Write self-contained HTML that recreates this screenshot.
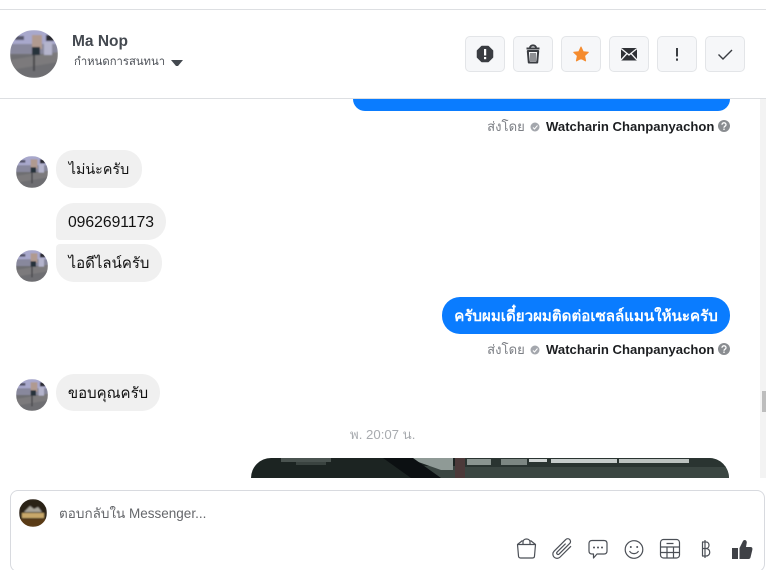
<!DOCTYPE html>
<html><head><meta charset="utf-8">
<style>
html,body{margin:0;padding:0;width:766px;height:570px;overflow:hidden;background:#fff;font-family:"Liberation Sans","Noto Sans CJK SC","WenQuanYi Zen Hei",sans-serif;color:#1c1e21}
#w{position:relative;width:766px;height:570px;overflow:hidden}
.a{position:absolute;white-space:nowrap}
.line{position:absolute;left:0;height:1px;background:#dddfe2}
.b{position:absolute;top:36px;width:38px;height:34px;background:#f6f7f9;border:1px solid #e3e5e8;border-radius:5px}
.b svg{position:absolute;left:0;top:0}
.bub{position:absolute;background:#f0f0f0;border-radius:18px;height:38px;line-height:40px;font-size:15px;color:#111;text-align:center;white-space:nowrap}
.sent{position:absolute;font-size:13.1px;white-space:nowrap;color:#90949c;height:16px;line-height:17px}
.sent b{font-weight:bold;color:#1c1e21}
</style></head>
<body><div id="w">
<svg width="0" height="0" style="position:absolute"><defs>
<clipPath id="c"><circle cx="24" cy="24" r="24"/></clipPath>
<filter id="bl"><feGaussianBlur stdDeviation="0.8"/></filter>
<g id="av"><g clip-path="url(#c)"><g filter="url(#bl)">
<rect width="48" height="48" fill="#8e8ea8"/>
<rect y="0" width="48" height="14" fill="#a8a8cc"/>
<rect y="14" width="48" height="12" fill="#88889c"/>
<rect y="24" width="48" height="24" fill="#6e6e72"/>
<path d="M0 30L48 22V32L0 40Z" fill="#7c7a7c"/>
<rect x="22" y="5" width="10" height="14" fill="#b09a90"/>
<rect x="22" y="17" width="8" height="8" fill="#28303a"/>
<rect x="23" y="25" width="2" height="16" fill="#46464c"/>
<rect x="36" y="5" width="8" height="6" fill="#2a2a30"/>
<rect x="34" y="12" width="8" height="13" fill="#b4b4cc"/>
<rect x="5" y="6" width="9" height="4" fill="#55556a"/>
</g></g></g>
</defs></svg>

<div class="line" style="top:9px;width:766px"></div>
<div class="line" style="top:98px;width:766px"></div>

<svg class="a" style="left:10px;top:30px" width="48" height="48"><use href="#av"/></svg>
<div class="a" style="left:72px;top:33px;font-size:15.500px;line-height:18px;font-weight:bold;color:#444950">Ma Nop</div>
<div class="a" style="left:74px;top:55px;font-size:11.300px;line-height:14px;color:#4b4f56">กำหนดการสนทนา</div>
<svg class="a" style="left:171px;top:60px" width="12" height="7"><path d="M0 0H12L7 6H5Z" fill="#444950"/></svg>

<div class="b" style="left:465px"><svg width="38" height="34"><path d="M15.800 9.500h6.400l4.300 4.300v6.400l-4.300 4.300h-6.400l-4.300-4.300v-6.400z" fill="#3a3d42" stroke="#3a3d42" stroke-width="1.500" stroke-linejoin="round"/><rect x="18" y="12" width="2.200" height="6.500" fill="#fff"/><rect x="18" y="20" width="2.200" height="2.200" fill="#fff"/></svg></div>
<div class="b" style="left:513px"><svg width="38" height="34"><path d="M12.500 11.500h13M16 11c0-3.500 6-3.500 6 0" fill="none" stroke="#3a3d42" stroke-width="2"/><path d="M13.800 14h10.400l-1 11.500h-8.400z" fill="none" stroke="#3a3d42" stroke-width="2" stroke-linejoin="round"/><path d="M17 16v8M19 16v8M21 16v8" stroke="#3a3d42" stroke-width="1.100"/></svg></div>
<div class="b" style="left:561px"><svg width="38" height="34"><path d="M19 10l2.200 4.700 5.100.6-3.700 3.500 1 5.100-4.600-2.500-4.600 2.500 1-5.100-3.700-3.500 5.100-.6z" fill="#f58b2e" stroke="#f58b2e" stroke-linejoin="round"/></svg></div>
<div class="b" style="left:609px"><svg width="38" height="34"><rect x="11" y="11" width="16" height="12.500" fill="#2f3136"/><path d="M11 11.500l8 6.500 8-6.500M11 23l6-6.500M27 23l-6-6.500" fill="none" stroke="#f6f7f9" stroke-width="1.300"/></svg></div>
<div class="b" style="left:657px"><svg width="38" height="34"><rect x="18" y="11" width="2" height="8.500" fill="#3a3d42"/><rect x="18" y="21.500" width="2" height="2.200" fill="#3a3d42"/></svg></div>
<div class="b" style="left:705px"><svg width="38" height="34"><path d="M12.500 17.500l4.500 4.500 9-9" fill="none" stroke="#3a3d42" stroke-width="1.400"/></svg></div>

<!-- scrollbar -->
<div class="a" style="left:760px;top:99px;width:6px;height:379px;background:#f3f3f3"></div>
<div class="a" style="left:762px;top:391px;width:4px;height:21px;background:#bdbdbd"></div>

<!-- messages -->
<div class="a" style="left:353px;top:99px;width:377px;height:12px;background:#0a7cff;border-radius:0 0 18px 18px"></div>

<div class="sent" style="right:36px;top:118px"><span style="color:#7c7f85;margin-right:1px">ส่งโดย</span> <svg width="10" height="10" style="vertical-align:-1px;margin:0 2px 0 1px"><circle cx="5" cy="5" r="4.500" fill="#a4a7ad"/><path d="M3 5.500l1.500 1.500 3-3.500" stroke="#fff" fill="none"/></svg> <b>Watcharin Chanpanyachon</b> <svg width="12" height="12" style="vertical-align:-1px"><circle cx="6" cy="6" r="6" fill="#8a8d91"/><path d="M4 4.700c0-2.500 4-2.500 4 0 0 1.500-2 1.500-2 3M6 8.500v1.500" stroke="#fff" stroke-width="1.300" fill="none"/></svg></div>

<svg class="a" style="left:16px;top:156px" width="32" height="32" viewBox="0 0 48 48"><use href="#av"/></svg>
<div class="bub" style="left:56px;top:150px;width:86px;font-size:14.300px">ไม่น่ะครับ</div>

<div class="bub" style="left:56px;top:203px;width:110px;height:37px;border-radius:18px 18px 18px 4px;font-size:15.700px;line-height:39px">0962691173</div>
<svg class="a" style="left:16px;top:250px" width="32" height="32" viewBox="0 0 48 48"><use href="#av"/></svg>
<div class="bub" style="left:56px;top:244px;width:106px;border-radius:4px 18px 18px 18px">ไอดีไลน์ครับ</div>

<div class="bub" style="left:442px;top:297px;width:288px;height:37px;line-height:39px;background:#0a7cff;color:#fff;font-weight:bold;font-size:15.100px">ครับผมเดี๋ยวผมติดต่อเซลล์แมนให้นะครับ</div>

<div class="sent" style="right:36px;top:341px"><span style="color:#7c7f85;margin-right:1px">ส่งโดย</span> <svg width="10" height="10" style="vertical-align:-1px;margin:0 2px 0 1px"><circle cx="5" cy="5" r="4.500" fill="#a4a7ad"/><path d="M3 5.500l1.500 1.500 3-3.500" stroke="#fff" fill="none"/></svg> <b>Watcharin Chanpanyachon</b> <svg width="12" height="12" style="vertical-align:-1px"><circle cx="6" cy="6" r="6" fill="#8a8d91"/><path d="M4 4.700c0-2.500 4-2.500 4 0 0 1.500-2 1.500-2 3M6 8.500v1.500" stroke="#fff" stroke-width="1.300" fill="none"/></svg></div>

<svg class="a" style="left:16px;top:379px" width="32" height="32" viewBox="0 0 48 48"><use href="#av"/></svg>
<div class="bub" style="left:56px;top:374px;width:104px;height:37px;line-height:39px">ขอบคุณครับ</div>

<div class="a" style="left:350px;top:427px;font-size:13.200px;line-height:16px;color:#a8abaf">พ. 20:07 น.</div>

<svg class="a" style="left:251px;top:458px" width="478" height="20"><defs><clipPath id="img"><path d="M20 0H458a20 20 0 0 1 20 20H0A20 20 0 0 1 20 0Z"/></clipPath></defs><g clip-path="url(#img)"><rect width="478" height="20" fill="#1c2422"/>
<rect x="30" y="0" width="50" height="4" fill="#4a5350"/><rect x="45" y="4" width="30" height="3" fill="#3a4340"/>
<rect x="170" y="8" width="308" height="12" fill="#3b4642"/>
<path d="M156 0H202V12H190Z" fill="#8f9a96"/>
<path d="M132 0H162L190 20H160Z" fill="#0c1012"/>
<rect x="204" y="0" width="10" height="20" fill="#4c3a3a"/>
<rect x="214" y="0" width="264" height="9" fill="#2a3431"/>
<rect x="216" y="1" width="24" height="6" fill="#8a9490"/><rect x="250" y="1" width="26" height="6" fill="#7c8682"/>
<rect x="278" y="1" width="18" height="3" fill="#d0d5d4"/><rect x="300" y="1" width="66" height="4" fill="#c6cccb"/><rect x="368" y="1" width="70" height="4" fill="#bcc2c0"/>
</g></svg>

<!-- composer -->
<div class="a" style="left:10px;top:490px;width:755px;height:82px;border:1px solid #d8dadf;border-radius:8px;box-sizing:border-box;background:#fff"></div>
<svg class="a" style="left:19px;top:499px" width="28" height="28"><defs><clipPath id="c2"><circle cx="14" cy="14" r="14"/></clipPath></defs><g clip-path="url(#c2)"><g filter="url(#bl)"><rect width="28" height="28" fill="#2a2018"/><rect y="20" width="28" height="8" fill="#5a3a12"/><rect x="3" y="14" width="22" height="5" fill="#c8a86a"/><path d="M5 13l6-6 4 3 4-2 4 5z" fill="#a8a49a"/></g></g></svg>
<div class="a" style="left:59px;top:506px;font-size:13.500px;line-height:16px;color:#65676b">ตอบกลับใน Messenger...</div>

<svg class="a" style="left:510px;top:532px" width="250" height="34" fill="none" stroke="#4b4f56" stroke-width="1.200">
<!-- bag -->
<path d="M7.500 12.500h18l-1 11.500c0 1.500-1 2-2 2h-12c-1 0-2-.5-2-2z" stroke-linejoin="round"/><path d="M13 12.500V10c0-4 7-4 7 0v2.500M7.500 12.500l5-4M25.500 12.500l-5-4"/>
<!-- clip -->
<g transform="translate(52.500 17) rotate(45)"><path d="M4 -8V7.500a4.200 4.200 0 0 1 -8.400 0V-9a2.800 2.800 0 0 1 5.600 0V6a1.300 1.300 0 0 1 -2.800 0V-6"/></g>
<!-- chat -->
<path d="M82 8.500h12c2 0 3 1 3 3v7.500c0 2-1 3-3 3h-7l-3.500 4v-4h-1.500c-2 0-3-1-3-3v-7.500c0-2 1-3 3-3z" stroke-linejoin="round"/>
<g fill="#4b4f56" stroke="none"><circle cx="84" cy="15.500" r="1"/><circle cx="88" cy="15.500" r="1"/><circle cx="92" cy="15.500" r="1"/></g>
<!-- smile -->
<circle cx="124" cy="17.500" r="8.800"/><path d="M119.500 19c2 3.500 7 3.500 9 0"/><g fill="#4b4f56" stroke="none"><circle cx="120.800" cy="15" r="1"/><circle cx="127.200" cy="15" r="1"/></g>
<!-- table -->
<rect x="150.500" y="7.500" width="19" height="18.500" rx="3"/><path d="M150.500 15h19M150.500 20.500h19M157 15v11M163.500 15v11M156.500 11.500h7"/>
<!-- baht -->
<path d="M195 8v18M192 10h4c4 0 4 6.500 0 6.500h-4M196 16.500c5 0 5 7.500 0 7.500h-4M192.500 10v14"/>
<!-- thumb -->
<g fill="#3f4146" stroke="none"><rect x="222" y="16" width="6" height="11"/><path d="M229.500 16l3.500-7c1-1.800 3.800-1.200 3.800 1.500l-.8 4.500h4.500c1.800 0 2.200 1.500 1.800 3l-1.800 7.500c-.3 1-1 1.500-2 1.500h-9z"/></g>
</svg>
</div></body></html>
